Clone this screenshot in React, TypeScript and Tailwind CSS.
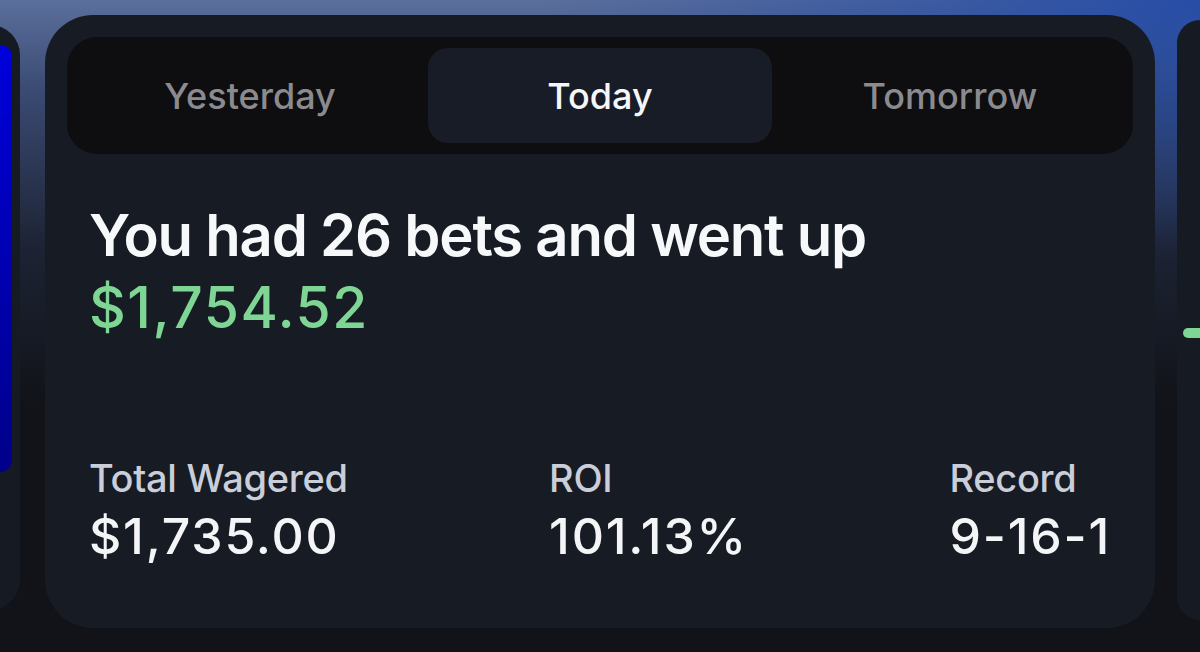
const TABS = ['Yesterday', 'Today', 'Tomorrow'];

const STATS = [
  { label: 'Total Wagered', value: '$1,735.00' },
  { label: 'ROI', value: '101.13%' },
  { label: 'Record', value: '9-16-1' },
];

export default function App() {
  return (
    <div
      className="relative flex h-[652px] w-full overflow-hidden bg-[radial-gradient(ellipse_55%_40%_at_100%_0%,#1f48a8dd,transparent),linear-gradient(180deg,#5b6f9c_0%,#3a4a72_14%,#1d2334_38%,#111318_62%)] font-['Inter','Noto_Sans',sans-serif]"
    >
      {/* PREVIOUS CARD (peeking on the left) */}
      <div className="-ml-[40px] mt-[25px] flex h-[585px] w-[60px] shrink-0 flex-col rounded-[30px] bg-[#161a23] pt-[20px]">
        <div className="h-[427px] w-[52px] rounded-r-[12px] bg-[linear-gradient(180deg,#0000dc,#00008a)]" />
      </div>

      {/* MAIN SUMMARY CARD */}
      <div className="ml-[25px] mt-[15px] flex h-[613px] w-[1110px] shrink-0 flex-col rounded-[48px] bg-[#171b24] p-[22px]">
        {/* DAY SWITCHER */}
        <div className="grid h-[117px] grid-cols-3 gap-[6px] rounded-[30px] bg-[#0e0e10] p-[11px]">
          {TABS.map(tab => (
            <div
              key={tab}
              className={
                tab === 'Today'
                  ? 'flex items-center justify-center rounded-[20px] bg-[#181c26] text-[36px] font-medium text-[#f5f6f8]'
                  : 'flex items-center justify-center text-[36px] font-medium text-[#8b8b8f]'
              }
            >
              {tab}
            </div>
          ))}
        </div>

        {/* HEADLINE */}
        <div className="px-[22px]">
          <h1 className="mt-[50px] text-[58px] font-semibold leading-[1.1] tracking-[-1.2px] text-[#f7f8fa]">
            You had 26 bets and went up
          </h1>
          <p className="mt-[9px] text-[57px] font-medium leading-[1.1] tracking-[1.5px] text-[#7fd594]">
            $1,754.52
          </p>

          {/* STATS ROW */}
          <div className="mt-[117px] flex justify-between">
            {STATS.map(stat => (
              <div key={stat.label} className="flex flex-col">
                <span className="text-[38px] font-medium leading-[1.2] tracking-[-0.3px] text-[#c9ced8]">
                  {stat.label}
                </span>
                <span className="mt-[6px] text-[50px] font-medium leading-[1.15] tracking-[1.8px] text-[#f4f5f7]">
                  {stat.value}
                </span>
              </div>
            ))}
          </div>
        </div>
      </div>

      {/* NEXT CARD (peeking on the right) */}
      <div className="ml-[22px] mt-[20px] h-[600px] flex-1 rounded-l-[36px] bg-[#161a23] pl-[6px] pt-[308px]">
        <div className="h-[10px] w-full rounded-l-full bg-[#7fd594]" />
      </div>
    </div>
  );
}
